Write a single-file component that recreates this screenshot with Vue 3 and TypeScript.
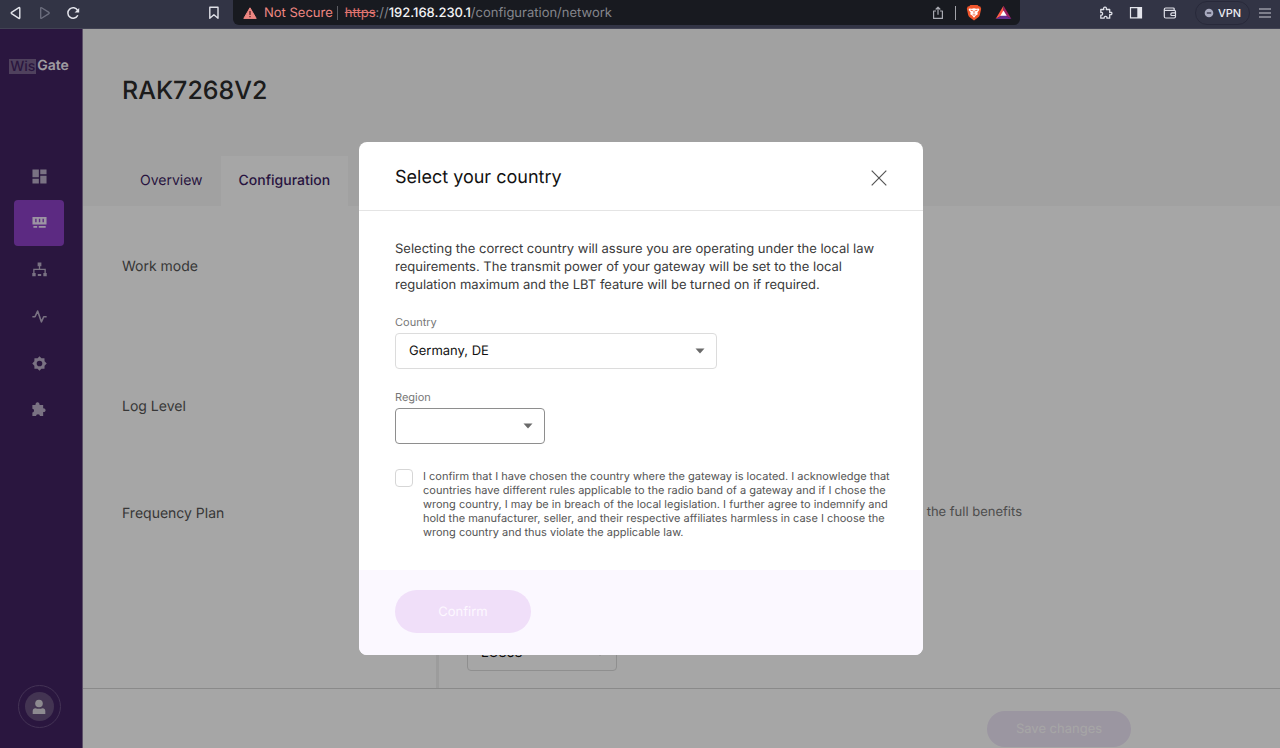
<script setup lang="ts">
import { ref } from 'vue'

const country = ref('Germany, DE')
const region = ref('')
const agreed = ref(false)
const plan = ref('EU868')
const url = { scheme: 'https', host: '192.168.230.1', path: '/configuration/network' }
</script>

<template>
  <div class="window">
    <header class="chrome">
      <div class="nav-buttons">
        <button type="button" aria-label="Back">
          <svg width="14" height="14" viewBox="0 0 14 14"><path d="M11.8 2.2v9.6q0 1-.9.5L3.6 7.6q-.8-.6 0-1.2l7.3-4.7q.9-.5.9.5z" fill="none" stroke="#e4e5ec" stroke-width="1.4" /></svg>
        </button>
        <button type="button" aria-label="Forward">
          <svg width="14" height="14" viewBox="0 0 14 14"><path d="M3.7 2.2v9.6q0 1 .9.5l7.3-4.7q.8-.6 0-1.2L4.6 1.7q-.9-.5-.9.5z" fill="none" stroke="#6d6f7f" stroke-width="1.3" /></svg>
        </button>
        <button type="button" aria-label="Reload">
          <svg width="14" height="14" viewBox="0 0 14 14"><path d="M11.8 9.2A5.2 5.2 0 1 1 11.6 4.4" fill="none" stroke="#e4e5ec" stroke-width="1.5" /><path d="M13.2 2v4.6H8.6z" fill="#e4e5ec" /></svg>
        </button>
      </div>
      <button type="button" class="bookmark" aria-label="Bookmark">
        <svg width="12" height="14" viewBox="0 0 12 14"><path d="M1.8 1.2h8.2v11L5.9 8.8l-4.1 3.4z" fill="none" stroke="#e0e1e8" stroke-width="1.4" stroke-linejoin="round" /></svg>
      </button>
      <div class="address">
        <svg width="14" height="12" viewBox="0 0 14 12"><path d="M7 .8 13.2 11.4H.8z" fill="#ee8782" stroke="#ee8782" stroke-width="1" stroke-linejoin="round" /><path d="M7 4v4M7 9v1.3" stroke="#5a2426" stroke-width="1.3" /></svg>
        <span class="warning">Not Secure</span>
        <span class="divider"></span>
        <span class="url"><s>{{ url.scheme }}</s>://<b>{{ url.host }}</b>{{ url.path }}</span>
        <button type="button" class="share" aria-label="Share">
          <svg width="12" height="14" viewBox="0 0 12 14"><path d="M4 5H1.6v7.4h8.8V5H8M6 8.8V1.4M3.7 3.5 6 1.2l2.3 2.3" fill="none" stroke="#a9aab2" stroke-width="1.2" stroke-linejoin="round" /></svg>
        </button>
        <span class="divider light"></span>
        <button type="button" class="shield" aria-label="Shields">
          <svg width="16" height="17" viewBox="0 0 16 17"><path d="M4.4 1h7.2l1.2 1.3 1.5.2.9 2.2-1.4 6.4q-.3 1.2-1.5 2.1L8 16.4l-4.3-3.2q-1.2-.9-1.5-2.1L.8 4.7l.9-2.2 1.5-.2z" fill="#f0562c" /><path d="m3.4 4.4 2.4.4L8 4.2l2.2.6 2.4-.4.8 1.4-2 2.6.4 1.8-2 1.4L8 13.8l-1.8-2.2-2-1.4.4-1.8-2-2.6z" fill="#fff" /><path d="m4.6 6.2 2.2.5M11.4 6.2l-2.2.5M8 6.6v3M6.7 10.4 8 11.2l1.3-.8" fill="none" stroke="#f0562c" stroke-width=".9" /></svg>
        </button>
        <button type="button" class="rewards" aria-label="Rewards">
          <svg width="17" height="15" viewBox="0 0 17 15"><path d="M8.5.8.6 14l7.9-4.6z" fill="#ff5c45" /><path d="M8.5.8 16.4 14 8.5 9.4z" fill="#9e1f63" /><path d="M.6 14h15.8L8.5 9.2z" fill="#662d91" /><path d="m8.5 5.5 3.2 5.3H5.3z" fill="#fff" /></svg>
        </button>
      </div>
      <div class="tools">
        <button type="button" aria-label="Extensions">
          <svg width="14" height="14" viewBox="0 0 14 14"><path d="M1.8 3.5h3q-.7-2.4 1.2-2.4t1.3 2.4h3.4v3q2.2-.6 2.2 1t-2.2 1.1v3.6H7.9q.4-1.8-1.3-1.8t-1.4 1.8H1.8V9.1q1.8.3 1.8-1.4T1.8 6.5z" fill="none" stroke="#dfe0e8" stroke-width="1.3" stroke-linejoin="round" /></svg>
        </button>
        <button type="button" aria-label="Side panel">
          <svg width="14" height="14" viewBox="0 0 14 14"><path d="M1.5 1.7h11v10.2h-11z" fill="none" stroke="#e4e5ec" stroke-width="1.2" /><path d="M8.3 1.5h4.2V12H8.3z" fill="#e4e5ec" /></svg>
        </button>
        <button type="button" aria-label="Wallet">
          <svg width="14" height="14" viewBox="0 0 14 14"><path d="M11.2 4.2V3q0-1-1-1H2.7Q1.3 2 1.3 3.2t1.4 1.2h8.5q1.3 0 1.3 1.2v5q0 1.4-1.3 1.4H2.8q-1.5 0-1.5-1.4V3.2M12.5 6.8H9.2q-1.4 0-1.4 1.4t1.4 1.3h3.3" fill="none" stroke="#dfe0e8" stroke-width="1.2" /></svg>
        </button>
      </div>
      <button type="button" class="vpn">
        <svg width="10" height="10" viewBox="0 0 10 10"><circle cx="5" cy="5" r="4.3" fill="#a9abc0" /><path d="M2.8 5h4.4" stroke="#2d2e40" stroke-width="1.3" /></svg>
        VPN
      </button>
      <button type="button" class="menu" aria-label="Menu">
        <svg width="14" height="12" viewBox="0 0 14 12"><path d="M1 2h12M1 6h12M1 10h12" stroke="#c9cad4" stroke-width="1.2" /></svg>
      </button>
    </header>

    <div class="app">
      <aside class="sidebar">
        <a class="logo" href="#"><span>Wis</span>Gate</a>
        <nav class="side-nav">
          <a href="#" aria-label="Dashboard"><svg viewBox="0 0 16 16"><path d="M.5.5h6.8v8.4H.5zM8.8.5h6.7v5.2H8.8zM.5 10.4h6.8v5.1H.5zM8.8 7.2h6.7v8.3H8.8z" /></svg></a>
          <a href="#" class="active" aria-label="Gateway"><svg viewBox="0 0 16 16"><path fill-rule="evenodd" d="M.5 2h15v8H.5zM3.4 4v3.6h1.5V4zM7.3 4v3.6h1.5V4zM11.2 4v3.6h1.5V4zM1.5 11.7h4v2h-4zM7.2 11.7h7.4v2H7.2z" /></svg></a>
          <a href="#" aria-label="Network"><svg viewBox="0 0 16 16"><path d="M6 .5h4v4H6zM.3 11.8h3.6v3.5H.3zM6.2 12.8h3.6v2H6.2zM12.1 11.8h3.6v3.5h-3.6z" /><path d="M8 4v3.7M2 12V7.8h12V12" fill="none" stroke="currentColor" stroke-width="1.4" /></svg></a>
          <a href="#" aria-label="Diagnostics"><svg viewBox="0 0 16 16"><path d="M.4 8.3h2.8L6 2.2l4 11.5 2.5-5.4h3.1" fill="none" stroke="currentColor" stroke-width="1.7" stroke-linejoin="round" /></svg></a>
          <a href="#" aria-label="Settings"><svg viewBox="0 0 16 16"><path fill-rule="evenodd" d="m8 .3 2 2.2 3.3-.2.1 3.2L15.7 8l-2.3 2.3-.1 3.3-3.3-.1L8 15.7l-2.1-2.2-3.3.1-.1-3.3L.3 8l2.2-2.4.1-3.3 3.4.2zM8 5a3 3 0 1 0 0 6 3 3 0 0 0 0-6z" /></svg></a>
          <a href="#" aria-label="Extensions"><svg viewBox="0 0 16 16"><path d="M.4 3.2h3.4a2.2 2.2 0 1 1 4.2 0h3.9v3.6a2 2 0 1 1 0 3.8v4.2H8.5a2.1 1.7 0 1 0-4.2 0H.4v-3.7a1.8 2 0 1 0 0-4z" /></svg></a>
        </nav>
        <button type="button" class="account" aria-label="Account">
          <span><svg width="14" height="16" viewBox="0 0 14 16"><circle cx="7" cy="4.5" r="3.8" fill="#d9d5dd" /><path d="M.7 15v-3Q.9 9.2 3.4 9.2q3.6 1.2 7.2 0 2.5 0 2.7 2.8v3z" fill="#d9d5dd" /></svg></span>
        </button>
      </aside>

      <main class="main">
        <div class="page-head">
          <h1>RAK7268V2</h1>
          <nav class="tabs">
            <a href="#">Overview</a>
            <a href="#" class="current">Configuration</a>
          </nav>
        </div>
        <div class="settings">
          <div class="labels">
            <h2 class="work">Work mode</h2>
            <h2 class="log">Log Level</h2>
            <h2>Frequency Plan</h2>
          </div>
          <div class="values">
            <p>the full benefits</p>
            <div class="select plan">
              <select v-model="plan" aria-label="Frequency Plan"><option>EU868</option></select>
              <svg width="10" height="6" viewBox="0 0 10 6"><path d="M.5.5h9L5 5.5z" fill="#6a6a6a" /></svg>
            </div>
          </div>
        </div>
        <footer class="page-foot"><button type="button" disabled>Save changes</button></footer>
      </main>

      <div class="overlay">
        <form class="dialog" role="dialog" aria-labelledby="dialog-title" @submit.prevent>
          <header class="dialog-head">
            <h2 id="dialog-title">Select your country</h2>
            <button type="button" aria-label="Close">
              <svg width="16" height="16" viewBox="0 0 16 16"><path d="m.7.7 14.6 14.6M15.3.7.7 15.3" stroke="#555" stroke-width="1.2" /></svg>
            </button>
          </header>
          <div class="dialog-body">
            <p class="intro">Selecting the correct country will assure you are operating under the local law requirements. The transmit power of your gateway will be set to the local regulation maximum and the LBT feature will be turned on if required.</p>
            <label class="field-label" for="country">Country</label>
            <div class="select country">
              <select id="country" v-model="country"><option>Germany, DE</option></select>
              <svg width="10" height="6" viewBox="0 0 10 6"><path d="M.5.5h9L5 5.5z" fill="#6a6a6a" /></svg>
            </div>
            <label class="field-label" for="region">Region</label>
            <div class="select region">
              <select id="region" v-model="region"><option value=""></option></select>
              <svg width="10" height="6" viewBox="0 0 10 6"><path d="M.5.5h9L5 5.5z" fill="#6a6a6a" /></svg>
            </div>
            <div class="consent">
              <input id="consent" v-model="agreed" type="checkbox" />
              <label for="consent">I confirm that I have chosen the country where the gateway is located. I acknowledge that countries have different rules applicable to the radio band of a gateway and if I chose the wrong country, I may be in breach of the local legislation. I further agree to indemnify and hold the manufacturer, seller, and their respective affiliates harmless in case I choose the wrong country and thus violate the applicable law.</label>
            </div>
          </div>
          <footer class="dialog-foot"><button type="submit" :disabled="!agreed">Confirm</button></footer>
        </form>
      </div>
    </div>
  </div>
</template>

<style>
body { margin: 0; }
</style>

<style scoped>
* { box-sizing: border-box; }
.window {
  height: 100vh;
  display: flex;
  flex-direction: column;
  overflow: hidden;
  font-family: Inter, "Liberation Sans", sans-serif;
  text-rendering: geometricPrecision;
}
button {
  font: inherit;
  color: inherit;
  text-rendering: inherit;
  border: 0;
  padding: 0;
  background: none;
  display: flex;
  align-items: center;
  justify-content: center;
}
h1, h2, p { margin: 0; font-weight: 400; }
a { color: inherit; text-decoration: none; }
select { appearance: none; font: inherit; text-rendering: inherit; }
svg { display: block; flex: none; }

.chrome {
  flex: none;
  height: 29px;
  padding: 0 8px;
  display: flex;
  align-items: center;
  background: #323445;
  border-bottom: 1px solid #424354;
}
.nav-buttons { display: flex; gap: 15px; padding-bottom: 3px; }
.bookmark { margin: 0 13px 3px auto; }
.address {
  align-self: flex-start;
  flex: none;
  width: 787px;
  height: 25px;
  padding: 0 8px 0 10px;
  display: flex;
  align-items: center;
  border-radius: 0 0 6px 6px;
  background: #181a20;
  font-size: 13px;
  color: #85868c;
}
.warning { margin-left: 7px; color: #ee8782; }
.divider { width: 1px; height: 14px; margin: 0 7px 0 4px; background: #5c5d63; }
.divider.light { margin: 0 10px 0 11px; background: #a2a3a9; }
.url s { color: #e27570; }
.url b { font-weight: 500; color: #f4f4f6; }
.share { margin-left: auto; }
.rewards { margin-left: 13px; }
.tools { display: flex; gap: 16px; margin: 0 18px 3px 79px; }
.tools button:last-child { margin-left: 4px; }
.vpn {
  gap: 4px;
  width: 55px;
  height: 24px;
  margin-bottom: 3px;
  border: 1px solid #28293a;
  border-radius: 12px;
  font-size: 11px;
  font-weight: 500;
  color: #ececf2;
}
.menu { margin: 0 0 3px 8px; }

.app { position: relative; flex: 1; min-height: 0; display: flex; }
.sidebar {
  flex: none;
  width: 83px;
  display: flex;
  flex-direction: column;
  align-items: center;
  padding: 28px 4px 20px 0;
  background: #412361;
  border-right: 1px solid #8c7a9f;
  color: #bcb0c9;
}
.logo { display: flex; align-items: center; font-size: 14px; line-height: 18px; font-weight: 600; color: #f4eff8; }
.logo span { padding: 0 1px; margin-right: 1px; line-height: 15px; font-weight: 500; background: #7a6590; color: #412361; }
.side-nav {
  height: 280px;
  margin-top: 78px;
  display: flex;
  flex-direction: column;
  justify-content: space-between;
}
.side-nav a {
  width: 50px;
  height: 46px;
  display: flex;
  align-items: center;
  justify-content: center;
  border-radius: 4px;
}
.side-nav svg { width: 15px; height: 15px; fill: currentColor; }
.side-nav .active { background: #8e41c8; color: #f0e4fa; }
.account { margin-top: auto; width: 43px; height: 43px; border: 1px solid #684e83; border-radius: 50%; }
.account span {
  width: 29px;
  height: 29px;
  display: flex;
  align-items: center;
  justify-content: center;
  border-radius: 50%;
  background: #67507f;
}

.main { flex: 1; min-width: 0; display: flex; flex-direction: column; background: #fff; }
.page-head {
  height: 177px;
  padding: 41px 39px 0;
  display: flex;
  flex-direction: column;
  justify-content: space-between;
  background: #f7f7f7;
}
h1 { font-size: 25px; line-height: 42px; font-weight: 500; color: #2b2b2b; }
.tabs { display: flex; font-size: 14px; color: #3d1d62; }
.tabs a { padding: 0 18px; line-height: 50px; }
.tabs .current { background: #fff; font-weight: 500; }
.settings { flex: 1; min-height: 0; padding-left: 39px; display: flex; }
.labels { width: 317px; padding-top: 51px; border-right: 3px solid #f0f0f0; }
.labels h2 { font-size: 14px; line-height: 20px; color: #555; }
.work { margin-bottom: 120px; }
.log { margin-bottom: 87px; }
.values { width: 583px; padding: 296px 0 0 28px; }
.values p { font-size: 13px; line-height: 20px; text-align: right; color: #777; }
.page-foot {
  height: 60px;
  padding: 22px 149px 0 0;
  display: flex;
  justify-content: flex-end;
  border-top: 1px solid #d4d4d4;
}
.page-foot button {
  width: 144px;
  height: 36px;
  border-radius: 18px;
  background: #efe6f8;
  font-size: 13px;
  color: #fff;
}

.overlay {
  position: absolute;
  inset: 0;
  display: flex;
  justify-content: center;
  align-items: flex-start;
  padding: 113px 0 0 2px;
  background: rgba(0, 0, 0, 0.35);
}
.dialog { width: 564px; border-radius: 8px; overflow: hidden; background: #fff; }
.dialog-head {
  height: 69px;
  padding: 3px 36px 0;
  display: flex;
  align-items: center;
  justify-content: space-between;
  border-bottom: 1px solid #e4e4e4;
}
.dialog-head h2 { font-size: 18px; line-height: 24px; color: #111; }
.dialog-body { padding: 29px 28px 31px 36px; }
.intro { margin-bottom: 20px; font-size: 13px; line-height: 18px; color: #3a3a3a; }
.field-label { display: block; margin-bottom: 3px; font-size: 11px; line-height: 16px; color: #777; }
.select { display: grid; align-items: center; height: 36px; }
.select > * { grid-area: 1 / 1; }
.select select {
  width: 100%;
  height: 36px;
  padding: 0 13px;
  border: 1px solid #dcdcdc;
  border-radius: 4px;
  background: #fff;
  font-size: 13px;
  color: #111;
}
.select svg { justify-self: end; margin-right: 12px; pointer-events: none; }
.plan { width: 150px; margin-top: 113px; }
.country { width: 322px; margin-bottom: 20px; }
.region { width: 150px; margin-bottom: 25px; }
.region select { border-color: #8e8e8e; }
.consent { display: flex; align-items: flex-start; gap: 10px; }
.consent input {
  appearance: none;
  flex: none;
  width: 18px;
  height: 18px;
  margin: 0;
  border: 1px solid #d6d6d6;
  border-radius: 4px;
}
.consent label { font-size: 11px; line-height: 14px; color: #555; }
.dialog-foot { padding: 20px 36px 22px; background: #fbf8ff; }
.dialog-foot button {
  width: 136px;
  height: 43px;
  border-radius: 22px;
  background: #f0dff9;
  font-size: 13px;
  color: #fdf8ff;
}
</style>
